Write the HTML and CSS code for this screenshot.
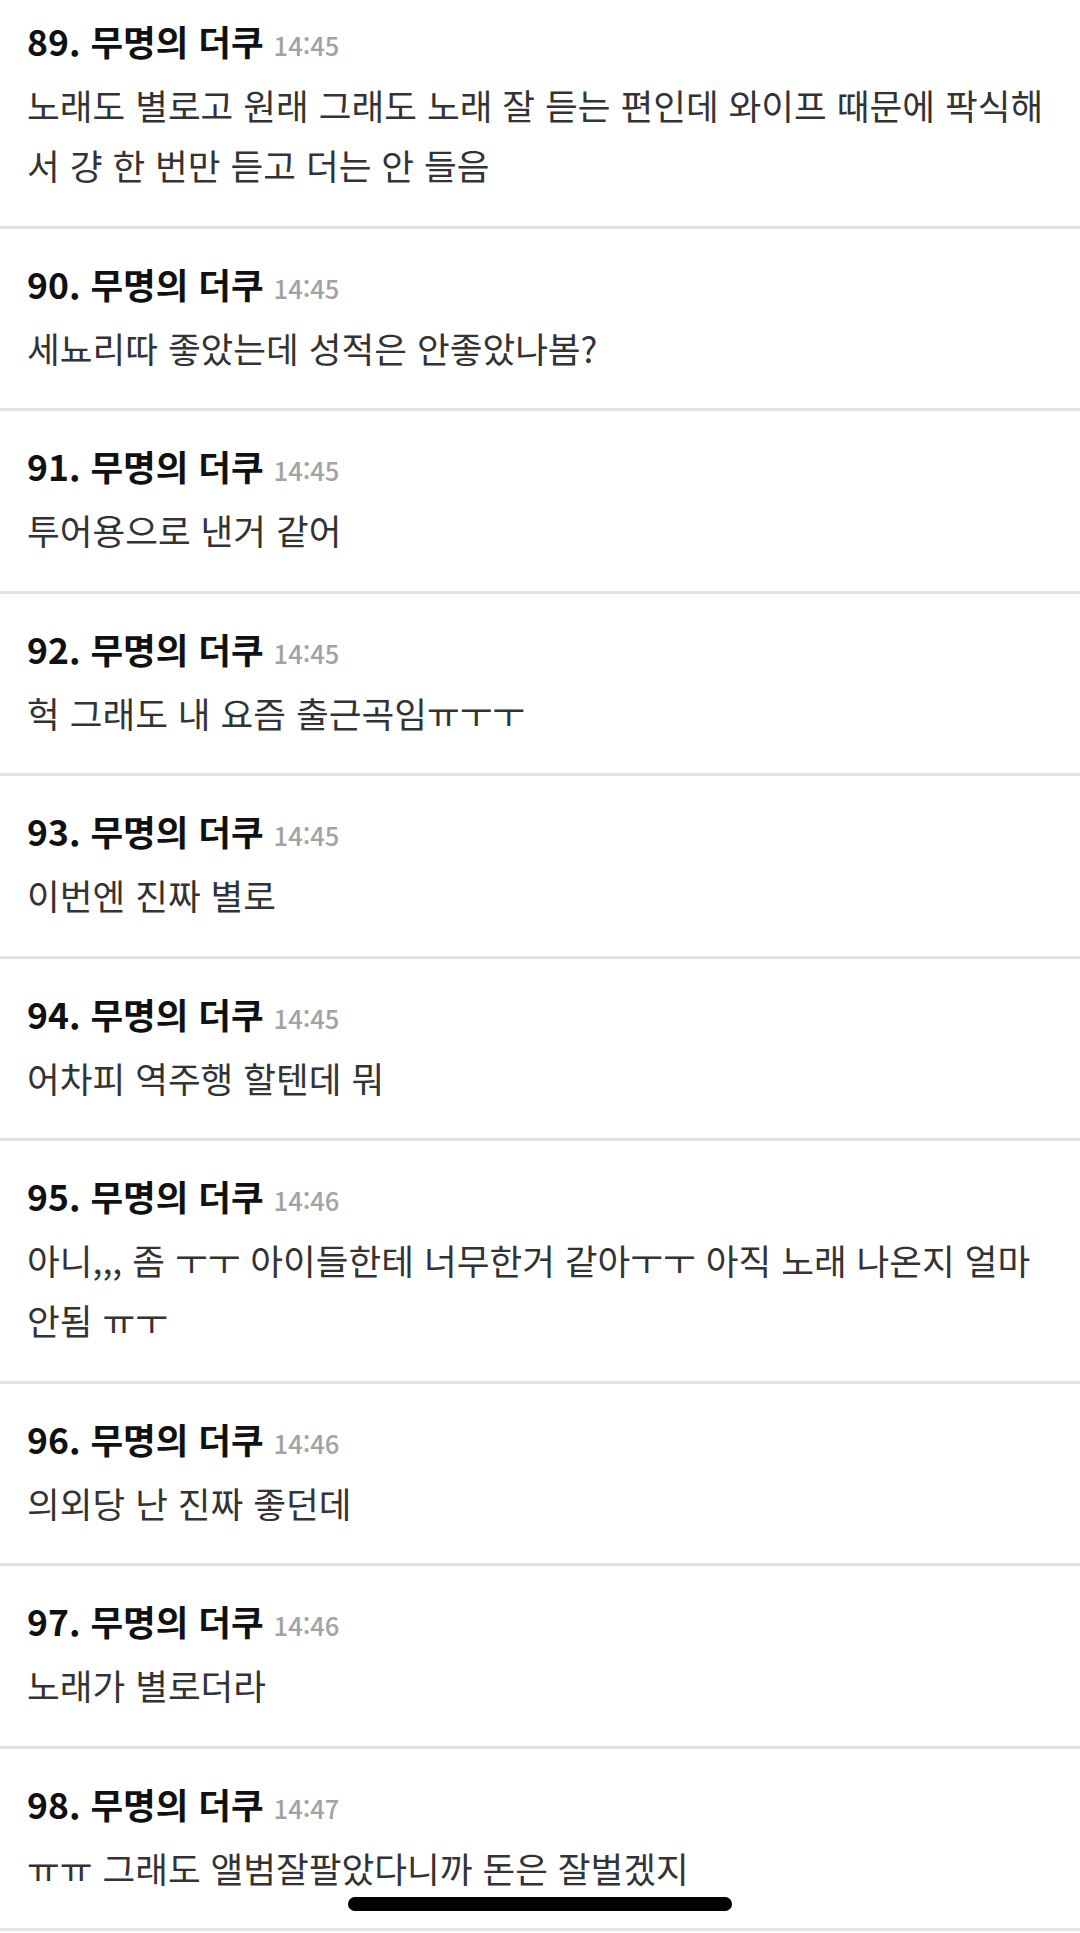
FILE: index.html
```html
<!DOCTYPE html>
<html lang="ko">
<head>
    <meta charset="UTF-8">
    <meta name="viewport" content="width=device-width, initial-scale=1.0">
    <title>댓글</title>
    <link rel="stylesheet" href="styles.css">
</head>
<body>

    <div class="comments">
        <div class="comment">
            <div class="head">89. 무명의 더쿠 <span class="time">14:45</span></div>
            <div class="text">노래도 별로고 원래 그래도 노래 잘 듣는 편인데 와이프 때문에 팍식해서 걍 한 번만 듣고 더는 안 들음</div>
        </div>
        <div class="comment">
            <div class="head">90. 무명의 더쿠 <span class="time">14:45</span></div>
            <div class="text">세뇨리따 좋았는데 성적은 안좋았나봄?</div>
        </div>
        <div class="comment">
            <div class="head">91. 무명의 더쿠 <span class="time">14:45</span></div>
            <div class="text">투어용으로 낸거 같어</div>
        </div>
        <div class="comment">
            <div class="head">92. 무명의 더쿠 <span class="time">14:45</span></div>
            <div class="text">헉 그래도 내 요즘 출근곡임ㅠㅜㅜ</div>
        </div>
        <div class="comment">
            <div class="head">93. 무명의 더쿠 <span class="time">14:45</span></div>
            <div class="text">이번엔 진짜 별로</div>
        </div>
        <div class="comment">
            <div class="head">94. 무명의 더쿠 <span class="time">14:45</span></div>
            <div class="text">어차피 역주행 할텐데 뭐</div>
        </div>
        <div class="comment">
            <div class="head">95. 무명의 더쿠 <span class="time">14:46</span></div>
            <div class="text">아니,,, 좀 ㅜㅜ 아이들한테 너무한거 같아ㅜㅜ 아직 노래 나온지 얼마 안됨 ㅠㅜ</div>
        </div>
        <div class="comment">
            <div class="head">96. 무명의 더쿠 <span class="time">14:46</span></div>
            <div class="text">의외당 난 진짜 좋던데</div>
        </div>
        <div class="comment">
            <div class="head">97. 무명의 더쿠 <span class="time">14:46</span></div>
            <div class="text">노래가 별로더라</div>
        </div>
        <div class="comment">
            <div class="head">98. 무명의 더쿠 <span class="time">14:47</span></div>
            <div class="text">ㅠㅠ 그래도 앨범잘팔았다니까 돈은 잘벌겠지</div>
        </div>
    </div>

    <!-- iOS home indicator -->
    <div class="home-bar"></div>

</body>
</html>
```

FILE: styles.css
```css
/* General Styles */
body {
    margin: 0;
    padding: 0;
    background-color: #fff;
    font-family: "Noto Sans CJK KR", "Noto Sans", sans-serif;
    overflow: hidden;
}

/* Comment list */
.comments {
    margin-top: -14px;
}

.comment {
    padding: 30px 28px 30.5px 27px;
    border-bottom: 3px solid #e2e2e2;
}

.head {
    height: 50px;
    font-size: 35.5px;
    font-weight: 700;
    line-height: 50px;
    color: #111;
}

.time {
    font-size: 25.5px;
    font-weight: 500;
    line-height: 1;
    color: #a3a3a3;
}

.text {
    margin-top: 9px;
    font-size: 35.6px;
    line-height: 60px;
    color: #333;
}

/* Home indicator */
.home-bar {
    position: fixed;
    left: 348px;
    top: 1897px;
    width: 384px;
    height: 14px;
    border-radius: 7px;
    background-color: #000;
}
```
